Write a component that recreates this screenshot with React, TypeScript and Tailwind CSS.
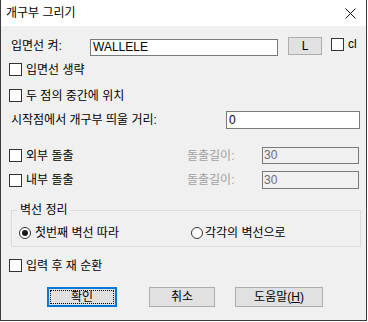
import React from "react";

function CheckBox() {
  return <span className="block w-[13px] h-[13px] border border-[#333333] bg-white shrink-0" />;
}

function Radio({ checked }: { checked?: boolean }) {
  return (
    <span className="flex items-center justify-center w-[12px] h-[12px] rounded-full border border-[#333333] bg-white shrink-0">
      {checked && <span className="block w-[6px] h-[6px] rounded-full bg-[#1a1a1a]" />}
    </span>
  );
}

export default function App() {
  return (
    <div className="w-[367px] h-[321px] border-l border-r border-b border-[#3c3c3c] bg-[#f0f0f0] text-[12px] leading-[16px] text-black font-['Liberation_Sans','Noto_Sans_CJK_KR',sans-serif] overflow-hidden">
      {/* title bar */}
      <div className="h-[26px] bg-white flex items-center justify-between pl-[5px] pr-[10px]">
        <span className="text-[12px]">개구부 그리기</span>
        <svg width="11" height="11" viewBox="0 0 11 11" className="mt-[1px]">
          <path d="M0.5 0.5 L10.5 10.5 M10.5 0.5 L0.5 10.5" stroke="#111" strokeWidth="1" />
        </svg>
      </div>

      <div className="pl-[8px]">
        {/* row 1 */}
        <div className="flex items-start h-[20px] mt-[11px]">
          <span className="ml-[2px] mt-[0px] w-[79px] leading-[17px] pt-[1px]">입면선 켜:</span>
          <div className="mt-[2px] w-[188px] h-[17px] border border-[#7a7a7a] bg-white pl-[2px] leading-[15px]">WALLELE</div>
          <div className="ml-[10px] w-[34px] h-[18px] border border-[#adadad] bg-[#e1e1e1] flex items-center justify-center leading-[16px]">L</div>
          <div className="ml-[9px] mt-[1px] flex items-center gap-[4px]">
            <CheckBox />
            <span className="leading-[13px]">cl</span>
          </div>
        </div>

        {/* row 2 */}
        <div className="flex items-center gap-[4px] h-[13px] mt-[6px]">
          <CheckBox />
          <span>입면선 생략</span>
        </div>

        {/* row 3 */}
        <div className="flex items-center gap-[4px] h-[13px] mt-[13px]">
          <CheckBox />
          <span>두 점의 중간에 위치</span>
        </div>

        {/* row 4 */}
        <div className="flex items-center h-[18px] mt-[9px]">
          <span className="ml-[2px] w-[215px]">시작점에서 개구부 띄울 거리:</span>
          <div className="w-[134px] h-[18px] border border-[#7a7a7a] bg-white pl-[2px] leading-[16px]">0</div>
        </div>

        {/* row 5 */}
        <div className="flex items-center h-[17px] mt-[18px]">
          <CheckBox />
          <span className="ml-[4px] w-[161px]">외부 돌출</span>
          <span className="w-[75px] text-[#a0a0a0]">돌출길이:</span>
          <div className="w-[97px] h-[17px] border border-[#7a7a7a] bg-[#f0f0f0] pl-[1px] leading-[15px] text-[#6d6d6d]">30</div>
        </div>

        {/* row 6 */}
        <div className="flex items-center h-[18px] mt-[7px]">
          <CheckBox />
          <span className="ml-[4px] w-[161px]">내부 돌출</span>
          <span className="w-[75px] text-[#a0a0a0]">돌출길이:</span>
          <div className="w-[97px] h-[18px] border border-[#7a7a7a] bg-[#f0f0f0] pl-[1px] leading-[16px] text-[#6d6d6d]">30</div>
        </div>

        {/* group */}
        <fieldset className="ml-[2px] mt-[13px] w-[350px] border border-[#dcdcdc] pb-[7px]">
          <legend className="ml-[5px] px-[3px] leading-[16px]">벽선 정리</legend>
          <div className="flex items-center h-[12px] mt-[9px]">
            <div className="ml-[7px] w-[172px] flex items-center gap-[4px]">
              <Radio checked />
              <span>첫번째 벽선 따라</span>
            </div>
            <div className="flex items-center gap-[2px]">
              <Radio />
              <span>각각의 벽선으로</span>
            </div>
          </div>
        </fieldset>

        {/* last checkbox */}
        <div className="flex items-center gap-[4px] h-[13px] mt-[12px]">
          <CheckBox />
          <span>입력 후 재 순환</span>
        </div>

        {/* buttons */}
        <div className="flex items-center mt-[15px] h-[20px]">
          <div className="ml-[38px] w-[70px] h-[20px] border-2 border-[#0078d7] bg-[#e1e1e1] p-[1px]">
            <div className="w-full h-full border border-dotted border-black flex items-center justify-center leading-[14px]">확인</div>
          </div>
          <div className="ml-[32px] w-[66px] h-[20px] border border-[#adadad] bg-[#e1e1e1] flex items-center justify-center">취소</div>
          <div className="ml-[20px] w-[88px] h-[20px] border border-[#adadad] bg-[#e1e1e1] flex items-center justify-center">
            도움말(<span className="underline">H</span>)
          </div>
        </div>
      </div>
    </div>
  );
}
